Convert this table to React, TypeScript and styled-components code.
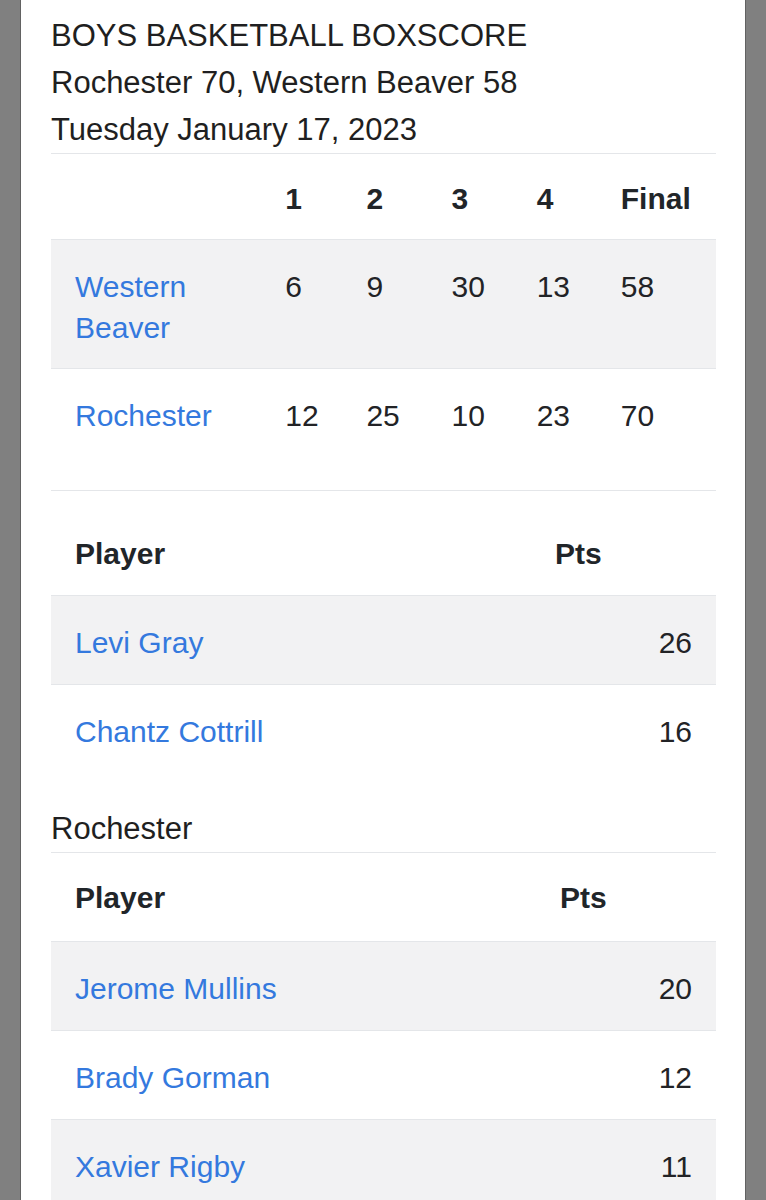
import React from "react";
import styled, {createGlobalStyle} from "styled-components";

type LineScore = {
    team: string
    quarters: number[]
    final: number
}

type PlayerLine = {
    name: string
    pts: number
}

const lineScores: LineScore[] = [
    {team: "Western Beaver", quarters: [6, 9, 30, 13], final: 58},
    {team: "Rochester", quarters: [12, 25, 10, 23], final: 70},
]

const westernBeaver: PlayerLine[] = [
    {name: "Levi Gray", pts: 26},
    {name: "Chantz Cottrill", pts: 16},
]

const rochester: PlayerLine[] = [
    {name: "Jerome Mullins", pts: 20},
    {name: "Brady Gorman", pts: 12},
    {name: "Xavier Rigby", pts: 11},
]

const colWidths = [210, 81, 85, 85, 84, 119]

const PlayerTable = (props: { players: PlayerLine[], ptsWidth: number, tall?: boolean }) => {
    const top = props.tall ? 42 : 24
    const bottom = props.tall ? 20 : 22
    return (
        <Table>
            <colgroup>
                <col/>
                <col style={{width: props.ptsWidth}}/>
            </colgroup>
            <thead>
            <tr>
                <HeadCell $top={top} $bottom={bottom}>Player</HeadCell>
                <HeadCell $top={top} $bottom={bottom}>Pts</HeadCell>
            </tr>
            </thead>
            <tbody>
            {props.players.map((p, i) => (
                <Row key={p.name} $striped={i % 2 === 0}>
                    <Cell><TeamLink href="#">{p.name}</TeamLink></Cell>
                    <Cell $right>{p.pts}</Cell>
                </Row>
            ))}
            </tbody>
        </Table>
    );
};

export default function App() {
    return (
        <>
            <GlobalStyle/>
            <Panel>
                <Heading>
                    <div>BOYS BASKETBALL BOXSCORE</div>
                    <div>Rochester 70, Western Beaver 58</div>
                    <div>Tuesday January 17, 2023</div>
                </Heading>

                <Table $tight>
                    <colgroup>
                        {colWidths.map((w, i) => <col key={i} style={{width: w}}/>)}
                    </colgroup>
                    <thead>
                    <tr>
                        <HeadCell $top={24} $bottom={20}></HeadCell>
                        <HeadCell $top={24} $bottom={20}>1</HeadCell>
                        <HeadCell $top={24} $bottom={20}>2</HeadCell>
                        <HeadCell $top={24} $bottom={20}>3</HeadCell>
                        <HeadCell $top={24} $bottom={20}>4</HeadCell>
                        <HeadCell $top={24} $bottom={20}>Final</HeadCell>
                    </tr>
                    </thead>
                    <tbody>
                    {lineScores.map((s, i) => (
                        <Row key={s.team} $striped={i % 2 === 0}>
                            <Cell><TeamLink href="#">{s.team}</TeamLink></Cell>
                            {s.quarters.map((q, j) => <Cell key={j}>{q}</Cell>)}
                            <Cell>{s.final}</Cell>
                        </Row>
                    ))}
                    </tbody>
                </Table>

                <PlayerTable players={westernBeaver} ptsWidth={185} tall/>

                <TeamCaption>Rochester</TeamCaption>
                <PlayerTable players={rochester} ptsWidth={180}/>
            </Panel>
        </>
    );
}

const GlobalStyle = createGlobalStyle`
    html, body {
        margin: 0;
        padding: 0;
        background: #808080;
    }

    body {
        font-family: "Liberation Sans", Arial, sans-serif;
        color: #212529;
    }
`

const Panel = styled.div`
    margin: 0 21px;
    min-height: 1200px;
    padding: 12px 29px 0 30px;
    background: #ffffff;
    box-shadow: -1px 0 0 #626262, 1px 0 0 #626262;
    box-sizing: border-box;
`

const Heading = styled.div`
    font-size: 31px;
    line-height: 47px;
    color: #1f1f21;
`

const Table = styled.table<{ $tight?: boolean }>`
    width: 100%;
    border-collapse: collapse;
    table-layout: fixed;
    margin-bottom: ${props => props.$tight ? "34px" : "32px"};
    font-size: 30px;
    line-height: ${props => props.$tight ? "41px" : "42px"};
`

const HeadCell = styled.th<{ $top?: number, $bottom?: number }>`
    text-align: left;
    vertical-align: top;
    font-weight: bold;
    color: #212529;
    padding: ${props => props.$top ?? 23}px 24px ${props => props.$bottom ?? 23}px;
    border-top: 1px solid #e4e6e9;
`

const Row = styled.tr<{ $striped?: boolean }>`
    background: ${props => props.$striped ? "#f2f2f3" : "#ffffff"};
`

const Cell = styled.td<{ $right?: boolean }>`
    vertical-align: top;
    padding: 26px 24px 20px;
    border-top: 1px solid #e4e6e9;
    color: #222326;
    text-align: ${props => props.$right ? "right" : "left"};
`

const TeamLink = styled.a`
    color: #3479de;
    text-decoration: none;
`

const TeamCaption = styled.div`
    font-size: 31px;
    line-height: 47px;
    color: #1f1f21;
`
